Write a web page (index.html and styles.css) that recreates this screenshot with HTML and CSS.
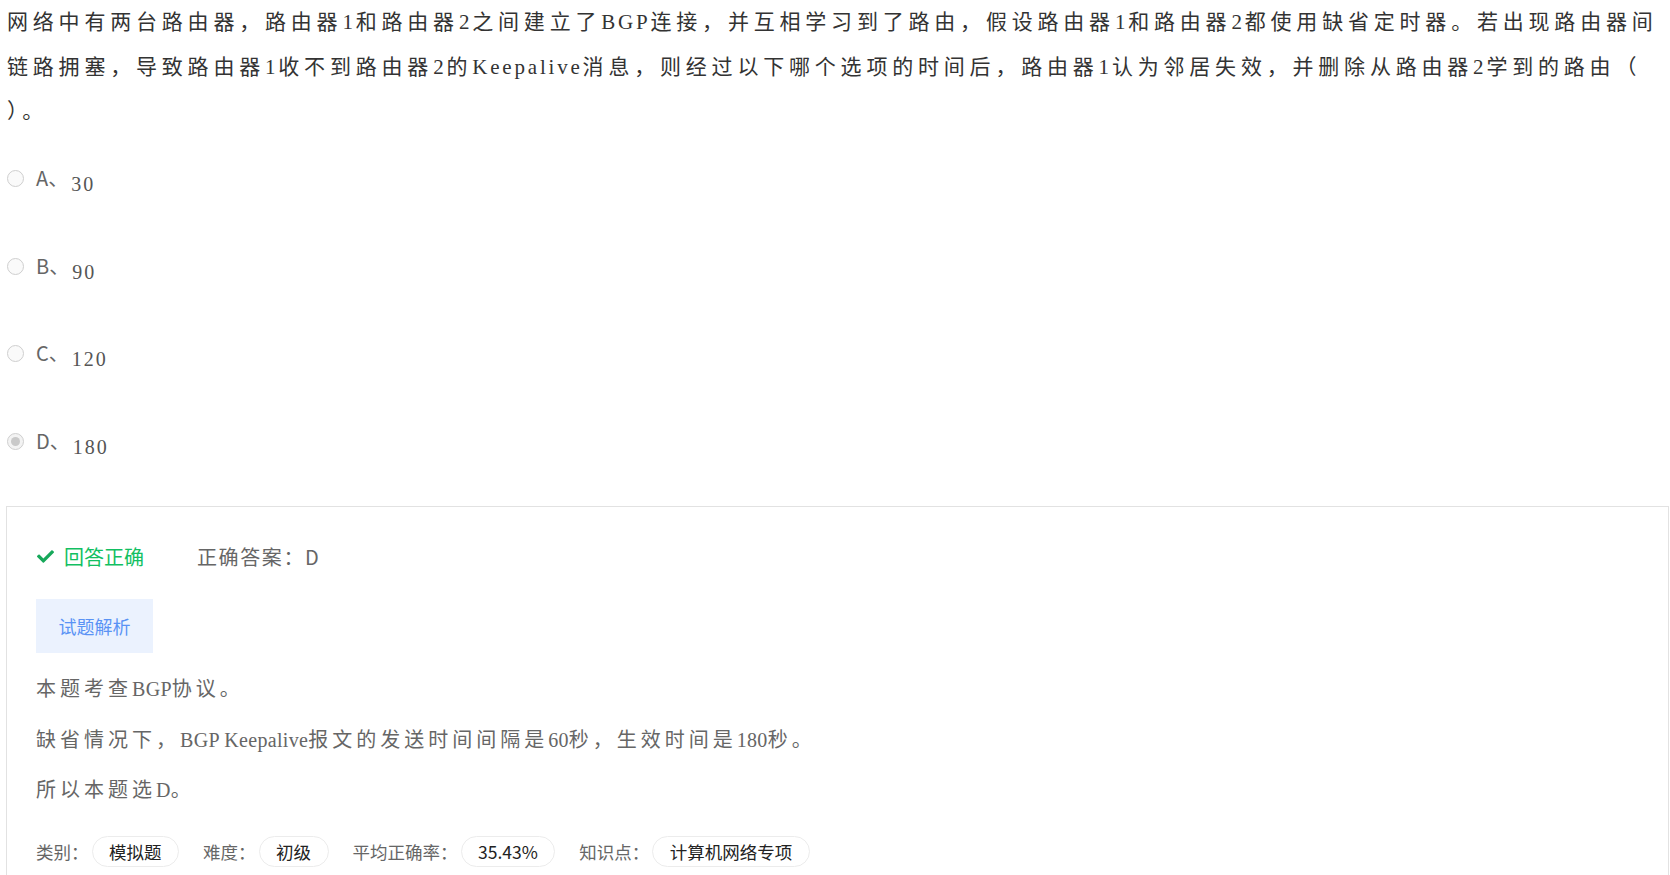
FILE: index.html
```html
<!DOCTYPE html>
<html lang="zh-CN">
<head>
  <meta charset="UTF-8" />
  <meta name="viewport" content="width=device-width, initial-scale=1" />
  <title>试题 - BGP</title>
  <link rel="stylesheet" href="styles.css">
</head>
<body>
  <div class="page">
    <p class="question">网络中有两台路由器，路由器<span class="en">1</span>和路由器<span class="en">2</span>之间建立了<span class="en">BGP</span>连接，并互相学习到了路由，假设路由器<span class="en">1</span>和路由器<span class="en">2</span>都使用缺省定时器。若出现路由器间链路拥塞，导致路由器<span class="en">1</span>收不到路由器<span class="en">2</span>的<span class="en">Keepalive</span>消息，则经过以下哪个选项的时间后，路由器<span class="en">1</span>认为邻居失效，并删除从路由器<span class="en">2</span>学到的路由（ ）。</p>

    <div class="options">
      <div class="option">
        <span class="radio"></span>
        <span class="opt-text"><span class="opt-label">A、</span><span class="opt-value">30</span></span>
      </div>
      <div class="option">
        <span class="radio"></span>
        <span class="opt-text"><span class="opt-label">B、</span><span class="opt-value">90</span></span>
      </div>
      <div class="option">
        <span class="radio"></span>
        <span class="opt-text"><span class="opt-label">C、</span><span class="opt-value">120</span></span>
      </div>
      <div class="option">
        <span class="radio checked"></span>
        <span class="opt-text"><span class="opt-label">D、</span><span class="opt-value">180</span></span>
      </div>
    </div>

    <!-- 答案区 -->
    <div class="answer-box">
      <div class="result">
        <span class="result-ok">
          <svg class="check" viewBox="0 0 512 512" width="17" height="17">
            <path fill="currentColor" d="M173.9 439.4l-166.4-166.4c-10-10-10-26.2 0-36.2l36.2-36.2c10-10 26.2-10 36.2 0L192 312.7 432.1 72.6c10-10 26.2-10 36.2 0l36.2 36.2c10 10 10 26.2 0 36.2l-294.4 294.4c-10 10-26.2 10-36.2 0z"/>
          </svg>
          回答正确
        </span>
        <span class="result-answer">正确答案：D</span>
      </div>

      <div class="tab-btn">试题解析</div>

      <div class="analysis">
        <p>本题考查<span class="en">BGP</span>协议。</p>
        <p>缺省情况下，<span class="en">BGP Keepalive</span>报文的发送时间间隔是<span class="en">60</span>秒，生效时间是<span class="en">180</span>秒。</p>
        <p>所以本题选<span class="en">D</span>。</p>
      </div>

      <div class="meta">
        <span class="meta-label">类别：</span><span class="chip">模拟题</span>
        <span class="meta-label">难度：</span><span class="chip">初级</span>
        <span class="meta-label">平均正确率：</span><span class="chip">35.43%</span>
        <span class="meta-label">知识点：</span><span class="chip">计算机网络专项</span>
      </div>
    </div>
  </div>
</body>
</html>
```

FILE: styles.css
```css
* {
  box-sizing: border-box;
}

html,
body {
  overflow: hidden;
}

body {
  margin: 0;
  background: #fff;
  font-family: "Noto Sans CJK SC", "Liberation Sans", sans-serif;
  color: #333;
}

.page {
  padding: 0 1px 0 6px;
}

.question {
  margin: 0;
  padding: 0 6px 0 1px;
  font-family: "Liberation Serif", "Noto Sans CJK SC", serif;
  font-size: 21px;
  line-height: 44.5px;
  letter-spacing: 4.8px;
  color: #333;
}

.question .en {
  letter-spacing: 2.8px;
}

/* 选项 */
.options {
  padding-top: 1.5px;
}

.option {
  display: flex;
  align-items: center;
  height: 87.5px;
  padding-left: 1px;
}

.radio {
  width: 17px;
  height: 17px;
  border: 1px solid #cfcfcf;
  border-radius: 50%;
  background: #fafafa;
  margin-right: 12px;
  display: flex;
  align-items: center;
  justify-content: center;
  flex-shrink: 0;
}

.radio.checked {
  background: #f3f3f3;
}

.radio.checked::after {
  content: "";
  width: 9px;
  height: 9px;
  border-radius: 50%;
  background: #c9c9c9;
}

.opt-text {
  line-height: 30px;
}

.opt-label {
  font-family: "Noto Sans CJK SC", sans-serif;
  font-size: 20px;
  color: #666;
}

.opt-value {
  font-family: "Liberation Serif", serif;
  font-size: 20px;
  letter-spacing: 2px;
  color: #555;
  margin-left: 3px;
  position: relative;
  top: 5px;
}

/* 答案区 */
.answer-box {
  margin-top: 21px;
  border: 1px solid #e2e2e2;
  padding: 34px 29px 40px;
}

.result {
  display: flex;
  align-items: center;
  height: 30px;
  font-size: 20px;
}

.result-ok {
  display: flex;
  align-items: center;
  color: #12bf62;
  margin-right: 53px;
}

.check {
  color: #17a85a;
  margin: 1px 10px 0 1px;
}

.result-answer {
  color: #666;
  letter-spacing: 1.6px;
}

.tab-btn {
  margin-top: 28px;
  width: 117px;
  height: 54px;
  display: flex;
  align-items: center;
  justify-content: center;
  background: #ebf2fe;
  color: #5a93f5;
  font-size: 18px;
}

.analysis {
  margin-top: 21px;
  font-family: "Liberation Serif", "Noto Sans CJK SC", serif;
  font-size: 20px;
  letter-spacing: 4px;
  color: #666;
}

.analysis p {
  margin: 0 0 20.5px;
  line-height: 30px;
}

.analysis .en {
  letter-spacing: 0.3px;
}

.meta {
  margin-top: 31px;
  display: flex;
  align-items: center;
  font-size: 17.5px;
}

.meta-label {
  color: #666;
  margin-right: 3px;
}

.chip {
  display: inline-flex;
  align-items: center;
  height: 31px;
  padding: 0 16.5px;
  border: 1px solid #ececec;
  border-radius: 16px;
  color: #222;
  margin-right: 24px;
}
```
